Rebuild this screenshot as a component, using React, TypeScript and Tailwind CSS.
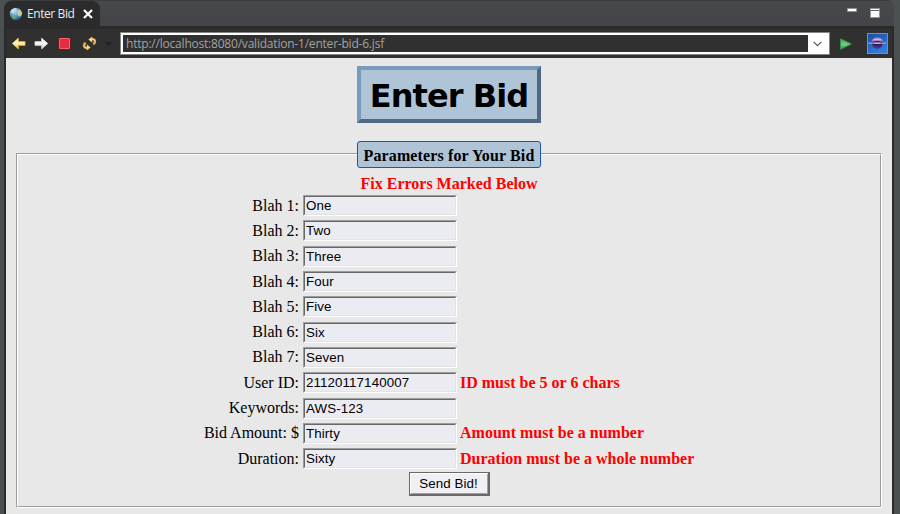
import React from "react";

type Field = { label: string; value: string; error?: string };

const fields: Field[] = [
  { label: "Blah 1:", value: "One" },
  { label: "Blah 2:", value: "Two" },
  { label: "Blah 3:", value: "Three" },
  { label: "Blah 4:", value: "Four" },
  { label: "Blah 5:", value: "Five" },
  { label: "Blah 6:", value: "Six" },
  { label: "Blah 7:", value: "Seven" },
  { label: "User ID:", value: "21120117140007", error: "ID must be 5 or 6 chars" },
  { label: "Keywords:", value: "AWS-123" },
  { label: "Bid Amount: $", value: "Thirty", error: "Amount must be a number" },
  { label: "Duration:", value: "Sixty", error: "Duration must be a whole number" },
];

function Globe() {
  return (
    <svg width="14" height="14" viewBox="0 0 14 14" className="shrink-0">
      <defs>
        <radialGradient id="globe" cx="0.4" cy="0.3" r="0.75">
          <stop offset="0" stopColor="#b9dcec" />
          <stop offset="0.6" stopColor="#4c8fb9" />
          <stop offset="1" stopColor="#1d4668" />
        </radialGradient>
      </defs>
      <circle cx="7" cy="7" r="6.3" fill="url(#globe)" />
      <path d="M3 2.2 6.5 1l1.3 1.5-2 1.3L5.2 5.5 3.3 6.3 1.2 5z" fill="#c5dce4" />
      <path d="M8.3 3.5l2.7-.8 1.7 2.5.2 2.2-2.2 2.3L8.4 7.6z" fill="#c8cc9b" />
      <path d="M3.5 8l2.5 1 .7 1.6-1.4 1.8L3.5 11z" fill="#78a36b" />
    </svg>
  );
}

function Arrow({ right }: { right?: boolean }) {
  return (
    <svg width="15" height="13" viewBox="0 0 15 13" className="shrink-0">
      <defs>
        <linearGradient id={right ? "silver" : "gold"} x2="0" y2="1">
          <stop offset="0" stopColor={right ? "#ffffff" : "#fffbe0"} />
          <stop offset="0.5" stopColor={right ? "#f6f6f6" : "#fff0b0"} />
          <stop offset="1" stopColor={right ? "#cfcfcf" : "#efb83a"} />
        </linearGradient>
      </defs>
      <path
        d={right ? "M1 4.7h6.7V1.2L13.7 6.5 7.7 11.8V8.3H1z" : "M14 4.7H7.3V1.2L1.3 6.5l6 5.3V8.3H14z"}
        fill={right ? "url(#silver)" : "url(#gold)"}
        stroke={right ? "#dedede" : "#f2bc42"}
        strokeWidth="0.9"
        strokeLinejoin="round"
      />
    </svg>
  );
}

function Refresh() {
  return (
    <svg width="15" height="15" viewBox="0 0 15 15" className="shrink-0">
      <g fill="none" strokeLinecap="butt">
        <path d="M9 3.2c2.5-.4 4 .6 4 2.3 0 1.2-.7 2-1.7 2.7" stroke="#e9ad4b" strokeWidth="2.4" />
        <path d="M9 3.2c2.3-.3 3.7.6 3.7 2.1" stroke="#fbe6ac" strokeWidth="1" />
        <path d="M6 11.8c-2.5.4-4-.6-4-2.3 0-1.2.7-2 1.7-2.7" stroke="#e9ad4b" strokeWidth="2.4" />
        <path d="M6 11.8c-2.3.3-3.7-.6-3.7-2.1" stroke="#fbe6ac" strokeWidth="1" />
      </g>
      <path d="M10.2.5v6.2L6.4 3.6zM4.8 14.5V8.3l3.8 3.1z" fill="#fbd27a" />
    </svg>
  );
}

function Eclipse() {
  return (
    <svg width="21" height="21" viewBox="0 0 21 21" className="shrink-0">
      <defs>
        <linearGradient id="sky" x2="0.5" y2="1">
          <stop offset="0" stopColor="#164fa2" />
          <stop offset="1" stopColor="#347ddd" />
        </linearGradient>
        <linearGradient id="orb" x2="0" y2="1">
          <stop offset="0" stopColor="#7f68b4" />
          <stop offset="0.2" stopColor="#cdb2e4" />
          <stop offset="0.45" stopColor="#4b3480" />
          <stop offset="1" stopColor="#40318a" />
        </linearGradient>
      </defs>
      <rect x="0.5" y="0.5" width="20" height="20" fill="url(#sky)" stroke="#4b9af0" />
      <circle cx="10.3" cy="10" r="5.8" fill="url(#orb)" />
      <ellipse cx="10.3" cy="10.4" rx="4.8" ry="2.5" fill="#2f1e58" />
      <path d="M1.5 10.2h17.5" stroke="#b3a0dc" strokeWidth="1.2" />
      <path d="M7.5 10.2h5.6" stroke="#d3c3e8" strokeWidth="1" />
    </svg>
  );
}

function TitleBar() {
  return (
    <div className="flex h-[26px] justify-between overflow-hidden rounded-t-lg border-t border-[#3a3c3e] bg-linear-to-b from-[#46484b] to-[#434447]">
      <div className="flex h-[26px] w-24 items-center rounded-t-lg bg-[#2b2b2b] pl-[5px]">
        <Globe />
        <span className="ml-1 w-[49px] whitespace-nowrap font-['Open_Sans',sans-serif] text-[12px] tracking-[-0.42px] text-[#e5edf2]">Enter Bid</span>
        <svg width="10" height="10" viewBox="0 0 10 10" className="ml-[7px]">
          <path d="M1 1l8 8M9 1 1 9" stroke="white" strokeWidth="2.2" />
        </svg>
      </div>
      <div className="flex items-start gap-[13px] pr-[14px]">
        <div className="mt-[7px] h-1 w-[10px] border border-[#929292] bg-white" />
        <div className="mt-[7px] h-[10px] w-[10px] border border-[#929292] bg-white pt-px">
          <div className="h-px bg-[#666]" />
        </div>
      </div>
    </div>
  );
}

function Toolbar() {
  return (
    <div className="flex h-8 items-center border-x-2 border-[#292929] bg-[#303030] pl-[5px] pt-[3px] shadow-[inset_0_3px_0_#2a2a2a]">
      <Arrow />
      <div className="ml-2 flex"><Arrow right /></div>
      <div className="ml-[10px] h-[11px] w-[11px] rounded-[1px] border border-[#f4626c] bg-[#df2f40] shadow-[0_0_0_1px_#681d26]" />
      <div className="ml-3"><Refresh /></div>
      <svg width="7" height="4" viewBox="0 0 7 4" className="ml-2"><path d="M0 0h7L3.5 4z" fill="#202020" /></svg>
      <div className="ml-[8px] flex h-[23px] w-[710px] shrink-0 border border-[#858585] bg-white p-[2px]">
        <div className="flex flex-1 items-center bg-[#303030] pl-[3px] font-['Open_Sans',sans-serif] text-[12px] tracking-[-0.21px] text-[#a3a3a3]">
          http://localhost:8080/validation-1/enter-bid-6.jsf
        </div>
        <div className="flex w-[19px] items-center justify-center">
          <svg width="9" height="6" viewBox="0 0 9 6"><path d="M.7.8 4.5 4.6 8.3.8" fill="none" stroke="#555" strokeWidth="1.2" /></svg>
        </div>
      </div>
      <svg width="12" height="12" viewBox="0 0 12 12" className="ml-[10px]">
        <defs><linearGradient id="go" x2="0" y2="1"><stop stopColor="#46a85a" /><stop offset="0.55" stopColor="#79c987" /><stop offset="1" stopColor="#299546" /></linearGradient></defs>
        <path d="M.6.8 11.3 6 .6 11.3z" fill="url(#go)" stroke="#32964a" />
      </svg>
      <div className="ml-[15px]"><Eclipse /></div>
    </div>
  );
}

function BidForm() {
  return (
    <div className="ml-[10px] mt-[30px] h-[355px] w-[866px] border border-b-white border-l-[#9d9d9d] border-r-white border-t-[#9d9d9d]">
      <div className="flex h-full flex-col border border-b-[#9d9d9d] border-l-white border-r-[#9d9d9d] border-t-white">
        <div className="-mt-[14px] flex h-[27px] w-[184px] shrink-0 items-center justify-center self-center rounded-[3px] border border-[#1c56b4] bg-[#b0c4d8] pt-[2px] font-bold tracking-[0.12px]">
          Parameters for Your Bid
        </div>
        <div className="mt-[5px] h-5 pt-px text-center font-bold leading-5 text-[#ff0000]">Fix Errors Marked Below</div>
        <div>
          {fields.map((field) => (
            <div key={field.label} className="flex h-[25.3px] items-center">
              <div className="w-[281px] text-right">{field.label}</div>
              <div className="ml-1 h-[21px] w-[154px] border border-b-white border-l-[#9c9c9c] border-r-white border-t-[#9c9c9c]">
                <input
                  defaultValue={field.value}
                  className="block h-full w-full border border-b-[#e3e3e3] border-l-[#686868] border-r-[#e3e3e3] border-t-[#686868] bg-[#ebebf2] px-px font-['Liberation_Sans',Arial,sans-serif] text-[13.33px] tracking-[0.1px] outline-none"
                />
              </div>
              {field.error && <div className="ml-[3px] font-bold text-[#ff0000]">{field.error}</div>}
            </div>
          ))}
        </div>
        <button className="mt-px flex h-6 w-[81px] shrink-0 items-center justify-center self-center border border-b-2 border-r-2 border-[#696969] bg-[#efeff4] font-['Liberation_Sans',Arial,sans-serif] text-[13.33px] tracking-[0.1px] shadow-[inset_1px_1px_0_white,inset_-1px_-1px_0_#a0a0a0]">
          Send Bid!
        </button>
      </div>
    </div>
  );
}

export default function App() {
  return (
    <main className="h-[514px] w-[900px] overflow-hidden bg-[#4b5153] pl-1 pr-[6px]">
      <TitleBar />
      <Toolbar />
      <div className="flex h-[456px] flex-col border-x-2 border-[#292b2c] bg-[#e8e8e8] pt-2 font-['Liberation_Serif',serif] text-[16px] leading-[18px] text-black">
        <h1 className="flex h-[57px] w-[184px] shrink-0 items-center justify-center self-center border-4 border-b-[#506982] border-l-[#779bbd] border-r-[#506982] border-t-[#779bbd] bg-[#b0c4d8] pt-[2px] font-['DejaVu_Sans',Verdana,sans-serif] text-[32px] font-bold leading-none tracking-[-0.95px]">
          Enter Bid
        </h1>
        <BidForm />
      </div>
    </main>
  );
}
